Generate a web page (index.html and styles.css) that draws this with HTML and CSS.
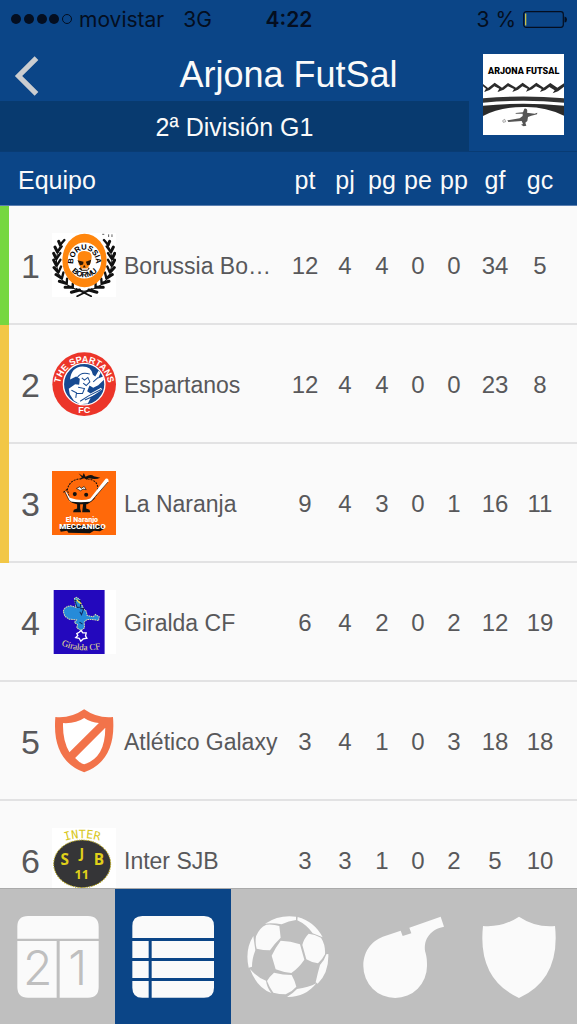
FILE: index.html
```html
<!DOCTYPE html>
<html lang="es">
<head>
    <meta charset="UTF-8">
    <meta name="viewport" content="width=device-width, initial-scale=1">
    <title>Arjona FutSal</title>
    <link rel="stylesheet" href="styles.css">
</head>
<body>
<div class="app">

    <header class="header">
        <div class="status">
            <div class="status-left">
                <svg class="signal" viewBox="0 0 61 12">
                    <circle cx="5" cy="6" r="5"/>
                    <circle cx="18" cy="6" r="5"/>
                    <circle cx="31" cy="6" r="5"/>
                    <circle cx="43" cy="6" r="5"/>
                    <circle cx="56" cy="6" r="4.5" fill="none" stroke="#040e20"/>
                </svg>
                <span>movistar</span>
                <span class="network">3G</span>
            </div>
            <div class="clock">4:22</div>
            <div class="status-right">
                <span>3 %</span>
                <svg class="battery" viewBox="0 0 44 17">
                    <rect x=".7" y=".7" width="39.6" height="15.6" rx="2.5" fill="none" stroke="#040e20" stroke-width="1.2"/>
                    <path d="M41.5 5.5Q44 6 44 8.500T41.500 11.500Z"/>
                    <rect x="2" y="2.500" width="1.300" height="12" fill="#c9c24b"/>
                </svg>
            </div>
        </div>

        <div class="bar">
            <button class="back" type="button" aria-label="Volver">
                <svg viewBox="0 0 24 38"><path d="M21 2 4 19 21 36" fill="none" stroke="#cbcdd0" stroke-width="5"/></svg>
            </button>
            <h1 class="title">Arjona FutSal</h1>
            <h2 class="division">2ª División G1</h2>
            <!--escudo del club-->
            <svg class="club" viewBox="9 12 243 243">
                <rect x="9" y="12" width="243" height="243" fill="#fff"/>
                <text class="club-name" x="131" y="73" text-anchor="middle">ARJONA FUTSAL</text>
                <path d="M9 102 24 114 44 98 66 113 84 99 108 113 128 98 149 113 169 98 191 113 211 99 232 113 252 100V110L234 124 218 130 224 121 208 111 196 120 180 126 185 117 168 109 156 118 138 125 143 116 127 109 114 119 97 126 102 117 84 109 71 119 52 126 58 116 43 109 29 120 12 126 18 116 9 109Z" fill="#2b2b2b"/>
                <path d="M9 145Q130 134 252 145V158Q130 147 9 158Z" fill="#333"/>
                <path d="M9 167Q130 155 252 167V197Q195 169 131 171 60 171 9 198Z" fill="#2b2b2b"/>
                <path d="M133 176Q141 174 142 182L141 188 164 191 172 188 171 193 154 197 144 201 142 213 136 218 139 227 131 229 123 224 129 222 125 213 85 216 82 211 119 205 128 198 128 191 107 191 107 189 129 187Z" fill="#555"/>
                <path d="M68 212 74 208 77 215 70 217Z" fill="none" stroke="#777" stroke-width="2"/>
            </svg>
        </div>
    </header>

    <main class="content">
        <table class="ranking">
            <colgroup>
                <col class="col-zone"><col class="col-rank"><col class="col-crest"><col>
                <col class="col-pt"><col class="col-pj"><col class="col-n"><col class="col-n"><col class="col-n"><col class="col-gf"><col class="col-gc">
            </colgroup>
            <thead>
                <tr>
                    <th class="team" colspan="4">Equipo</th>
                    <th>pt</th><th>pj</th><th>pg</th><th>pe</th><th>pp</th><th>gf</th><th>gc</th>
                </tr>
            </thead>
            <tbody>
                <tr>
                    <td class="zone promotion"></td>
                    <td class="rank">1</td>
                    <td class="crest">
                        <svg viewBox="156 82 191 191">
                            <rect x="156" y="82" width="191" height="191" fill="#fff"/>
                            <!--corona de laurel, mitad izquierda y su reflejo-->
                            <g id="laurel" fill="none" stroke="#111" stroke-linecap="round">
                                <path d="M192 103Q158 145 175 202 194 247 252 256" stroke-width="3"/>
                                <path d="M180 116 176 107M172 138 165 124M168 158 161 143M169 178 161 163M174 198 162 185M184 216 168 206M198 232 178 226M216 244 195 244M238 252 214 259" stroke-width="9"/>
                                <path d="M180 118 193 103M173 138 185 122M170 158 181 142M171 178 181 162M176 198 183 182M186 216 190 200M200 232 201 218M218 244 218 233" stroke-width="7"/>
                                <path d="M275 249 231 271" stroke-width="5"/>
                            </g>
                            <use href="#laurel" transform="matrix(-1 0 0 1 504 0)"/>
                            <path d="M306 86H312M325 86V94M335 86V94" fill="none" stroke="#111" stroke-width="2"/>
                            <ellipse cx="253" cy="164" rx="66" ry="80" fill="#ff860d"/>
                            <ellipse cx="253" cy="164" rx="50" ry="54" fill="#fff"/>
                            <path d="M233 158Q230 136 253 136 277 137 274 158L270 174 262 188H244L236 176Z" fill="#ff860d"/>
                            <path d="M232 163 250 168 249 176 240 178ZM257 168 273 162 269 177 261 178ZM252 177 257 185H248ZM242 184 246 192H262L266 184 268 189 261 195H244L236 188Z" fill="#2a1705"/>
                            <path id="arc1" d="M219 170A34 38 0 0 1 287 170" fill="none"/>
                            <path id="arc2" d="M207 174A46 40 0 0 0 299 174" fill="none"/>
                            <text class="ring-text" font-size="23" text-anchor="middle"><textPath href="#arc1" startOffset="50%">BORUSSIA</textPath></text>
                            <text class="ring-text" font-size="23" text-anchor="middle"><textPath href="#arc2" startOffset="50%">BORMU</textPath></text>
                        </svg>
                    </td>
                    <td class="name">Borussia Bo…</td>
                    <td>12</td><td>4</td><td>4</td><td>0</td><td>0</td><td>34</td><td>5</td>
                </tr>
                <tr>
                    <td class="zone playoff"></td>
                    <td class="rank">2</td>
                    <td class="crest">
                        <svg viewBox="156 81 191 191">
                            <circle cx="252" cy="177" r="95" fill="#ec3529"/>
                            <circle cx="252" cy="177" r="62" fill="#174a91" stroke="#fff" stroke-width="4"/>
                            <path d="M210 163Q213 126 247 124 274 124 278 149L285 154 295 137 301 143 293 160 309 154 311 164 294 180 279 188 268 181 261 198 271 205 302 188 306 193 272 216 263 235 239 237 221 226 209 207 206 191 225 177 237 179 239 161 228 154Z" fill="#fff"/>
                            <path d="M231 158Q243 138 269 147M245 158 253 165 263 157 269 170 258 181 249 174M214 195 229 203 227 218M234 186 253 190 247 205 229 204M240 228 265 212 303 193M254 224 293 207M279 170 294 157" fill="none" stroke="#174a91" stroke-width="3"/>
                            <path id="arc3" d="M180 184A72 72 0 1 1 324 184" fill="none"/>
                            <text class="ring-text" font-size="27" fill="#fff" text-anchor="middle"><textPath href="#arc3" startOffset="50%">THE SPARTANS</textPath></text>
                            <text class="ring-text" x="252" y="263" font-size="27" fill="#fff" text-anchor="middle">FC</text>
                        </svg>
                    </td>
                    <td class="name">Espartanos</td>
                    <td>12</td><td>4</td><td>4</td><td>0</td><td>0</td><td>23</td><td>8</td>
                </tr>
                <tr>
                    <td class="zone playoff"></td>
                    <td class="rank">3</td>
                    <td class="crest">
                        <svg viewBox="156 78 191 191">
                            <rect x="156" y="78" width="191" height="191" fill="#ff690a"/>
                            <path d="M235 85 247 93 251 84 256 95Q272 86 281 94L300 98Q286 105 265 99L260 104 252 100 239 103 245 97Z" fill="#111"/>
                            <path d="M244 101Q209 103 202 132L207 157M262 102Q290 104 293 128L288 153M190 142 202 132" fill="none" stroke="#111" stroke-width="3" stroke-dasharray="6 3"/>
                            <path d="M203 158Q246 181 287 157L273 170 261 177H230L216 173Z" fill="#111"/>
                            <path d="M194 138 200 142 209 158Q245 170 270 160L316 101Q325 98 325 109L277 164 269 170Q236 173 209 169Z" fill="#fff"/>
                            <path d="M194 139 206 164 214 171M323 111 277 164" fill="none" stroke="#111" stroke-width="2"/>
                            <path d="M229 130 239 125 243 130 252 124 258 134 249 132 241 137Z" fill="#fff" stroke="#111" stroke-width="2"/>
                            <circle cx="224" cy="147" r="6" fill="#111"/>
                            <circle cx="258" cy="149" r="6" fill="#111"/>
                            <path d="M231 176H240V190L243 201H219L221 194 231 190ZM249 176H258V190L268 194 270 201H246Z" fill="#111"/>
                            <path d="M179 250 184 240H305L312 250 299 258 281 256 269 264 205 262 201 256 182 259Z" fill="#111"/>
                            <text class="toon-text" x="245" y="229" font-size="21" text-anchor="middle">El Naranjo</text>
                            <text class="toon-text" x="247" y="251" font-size="24" text-anchor="middle">MECCANICO</text>
                        </svg>
                    </td>
                    <td class="name">La Naranja</td>
                    <td>9</td><td>4</td><td>3</td><td>0</td><td>1</td><td>16</td><td>11</td>
                </tr>
                <tr>
                    <td class="zone"></td>
                    <td class="rank">4</td>
                    <td class="crest">
                        <svg viewBox="156 75 191 191">
                            <rect x="156" y="75" width="191" height="191" fill="#fff"/>
                            <rect x="161" y="75" width="152" height="191" fill="#2308bd"/>
                            <path d="M190 139Q191 126 211 122L228 127 225 112 223 100 230 97 241 106 240 116 249 125 248 130 258 138 261 151 279 155 286 148 297 155 295 166 275 163 260 163 252 171 253 188 243 196 230 188 232 178 223 172 229 164 207 162 194 153Z" fill="#268bd9" stroke="#d6dcac" stroke-width="3" stroke-dasharray="5 2"/>
                            <path d="M224 106H241V126L231 127ZM240 131 251 130 244 149 239 140M238 171 247 177" fill="none" stroke="#10275c" stroke-width="3"/>
                            <path d="M229 103 235 110 244 116" fill="none" stroke="#f1e64c" stroke-width="4"/>
                            <path d="M230 205 237 201 243 196 248 203 258 203 256 212 260 219 249 221 242 228 237 219 227 217 233 211Z" fill="#2308bd" stroke="#fff" stroke-width="4"/>
                            <path id="arc4" d="M187 241Q240 263 298 251" fill="none"/>
                            <text class="script-text" font-size="27" text-anchor="middle"><textPath href="#arc4" startOffset="50%">Giralda CF</textPath></text>
                        </svg>
                    </td>
                    <td class="name">Giralda CF</td>
                    <td>6</td><td>4</td><td>2</td><td>0</td><td>2</td><td>12</td><td>19</td>
                </tr>
                <tr>
                    <td class="zone"></td>
                    <td class="rank">5</td>
                    <td class="crest">
                        <svg viewBox="156 72 191 191">
                            <path d="M252 73Q292 101 338 96 349 226 252 261 155 226 166 96 211 101 252 73Z" fill="#f2734a"/>
                            <path d="M252 99Q273 113 296 114L208 201Q187 166 189 114 228 116 252 99ZM315 128Q315 218 252 237 238 233 225 218Z" fill="#fff"/>
                        </svg>
                    </td>
                    <td class="name">Atlético Galaxy</td>
                    <td>3</td><td>4</td><td>1</td><td>0</td><td>3</td><td>18</td><td>18</td>
                </tr>
                <tr>
                    <td class="zone"></td>
                    <td class="rank">6</td>
                    <td class="crest">
                        <svg viewBox="156 428 191 191">
                            <rect x="156" y="428" width="191" height="191" fill="#fff"/>
                            <ellipse cx="246" cy="535" rx="85" ry="71" fill="#353537" stroke="#b5a51b" stroke-width="3" stroke-dasharray="4 3"/>
                            <path id="arc5" d="M182 471Q246 446 311 470" fill="none"/>
                            <text class="inter-text" font-size="35" text-anchor="middle"><textPath href="#arc5" startOffset="50%">INTER</textPath></text>
                            <g class="sjb-text" text-anchor="middle">
                                <text x="194" y="537" font-size="46">S</text>
                                <text x="245" y="519" font-size="42">J</text>
                                <text x="296" y="538" font-size="46">B</text>
                                <text x="245" y="581" font-size="38">11</text>
                            </g>
                        </svg>
                    </td>
                    <td class="name">Inter SJB</td>
                    <td>3</td><td>3</td><td>1</td><td>0</td><td>2</td><td>5</td><td>10</td>
                </tr>
            </tbody>
        </table>
    </main>

    <!--menu inferior-->
    <nav class="tabs">
        <a class="tab" href="#calendario" aria-label="Calendario">
            <svg viewBox="50 90 246 246">
                <path d="M51 158V122Q51 90 83 90H263Q295 90 295 122V158ZM51 165H169V335H83Q51 335 51 303ZM178 165H295V303Q295 335 263 335H178Z"/>
                <text class="day" x="112" y="297" text-anchor="middle">2</text>
                <text class="day" x="232" y="297" text-anchor="middle">1</text>
            </svg>
        </a>
        <a class="tab active" href="#clasificacion" aria-label="Clasificación">
            <svg viewBox="396 90 246 246">
                <path d="M397 156V120Q397 90 427 90H612Q642 90 642 120V156ZM397 165H446V216H397ZM455 165H642V216H455ZM397 225H446V276H397ZM455 225H642V276H455ZM397 285H446V335H427Q397 335 397 305ZM455 285H642V305Q642 335 612 335H455Z"/>
            </svg>
        </a>
        <a class="tab" href="#partidos" aria-label="Partidos">
            <svg viewBox="53 89 246 246">
                <path d="M107 112Q150 84 200 91V101Q178 104 157 114Q130 109 107 112ZM205 92Q255 105 280 153L250 141Q232 115 204 102ZM80 150Q90 124 111 115Q132 113 150 119L154 154Q136 171 122 192Q101 192 82 187Q77 170 80 150ZM219 176Q223 157 238 142Q256 143 275 154Q289 176 287 204Q279 220 266 231Q249 230 231 219ZM154 163Q184 164 212 174L225 220Q208 245 186 260Q161 258 139 249L127 208Q138 184 154 163ZM72 149 74 163 78 192Q68 218 68 241L58 244Q46 190 72 149ZM62 248Q82 272 110 283Q113 304 126 320Q82 303 62 248ZM134 259Q161 266 187 266Q197 284 201 301Q187 317 169 324Q150 324 132 319Q120 303 113 284Q121 270 134 259ZM174 331Q190 322 203 308Q238 304 261 291Q228 333 174 332ZM297 203Q299 260 265 292L259 288Q265 260 272 236Q286 221 291 204Z"/>
            </svg>
        </a>
        <a class="tab" href="#arbitros" aria-label="Árbitros">
            <svg viewBox="399 89 246 246">
                <path d="M400 239C400 190 430 160 465 149L512 133 518 149 544 141 538 124 632 91 642 121C595 130 578 167 587 201C591 215 591 228 591 239A95.500 96 0 0 1 400 239Z"/>
            </svg>
        </a>
        <a class="tab" href="#equipos" aria-label="Equipos">
            <svg viewBox="745 89 246 246">
                <path d="M868 91Q917 124 976 119 993 277 868 335 743 277 760 119 818 124 868 91Z"/>
            </svg>
        </a>
    </nav>

</div>
</body>
</html>
```
FILE: styles.css
```css
* {
    box-sizing: border-box;
}

body {
    margin: 0;
    font-family: "Liberation Sans", Arial, sans-serif;
    color: #58585a;
    background-color: #fafafa;
}

svg {
    display: block;
}

.app {
    display: flex;
    flex-direction: column;
    height: 100vh;
}

/* cabecera */
.header {
    color: #fafafa;
    background-color: #0b4587;
}

.status {
    display: grid;
    grid-template-columns: 1fr auto 1fr;
    align-items: center;
    height: 38px;
    padding: 0 10px 0 11px;
    font-family: Inter, sans-serif;
    font-size: 21px;
    color: #040e20;
    fill: #040e20;
}

.status-left, .status-right {
    display: flex;
    align-items: center;
    gap: 7px;
}

.status-right {
    justify-content: flex-end;
}

.signal {
    width: 61px;
    height: 12px;
}

.network {
    margin-left: 12px;
}

.clock {
    font-weight: 600;
}

.battery {
    width: 44px;
    height: 17px;
}

.bar {
    display: grid;
    grid-template-columns: 108px 1fr 108px;
    grid-template-rows: 63px 50px;
    border-bottom: 1px solid #093b73;
}

.back {
    padding: 12px 14px 0;
    border: 0;
    background: none;
    cursor: pointer;
}

.back svg {
    width: 26px;
    height: 40px;
}

.title {
    margin: 0;
    padding-top: 9px;
    font-size: 36px;
    font-weight: normal;
    line-height: 56px;
    text-align: center;
}

.division {
    grid-column: 1 / 3;
    grid-row: 2;
    margin: 0;
    font-size: 25px;
    font-weight: normal;
    line-height: 53px;
    text-align: center;
    background-color: #083a6f;
}

.club {
    grid-column: 3;
    grid-row: 1 / 3;
    align-self: center;
    width: 81px;
    height: 81px;
    margin-left: 14px;
}

.club-name {
    font: 900 27px Roboto, sans-serif;
    fill: #000;
}

/* clasificacion */
.content {
    flex: 1;
    min-height: 0;
    overflow-y: auto;
    scrollbar-width: none;
}

.ranking {
    width: 100%;
    table-layout: fixed;
    border-spacing: 0;
}

.col-zone { width: 9px; }
.col-rank { width: 43px; }
.col-crest { width: 64px; }
.col-pt { width: 42px; }
.col-pj { width: 38px; }
.col-n { width: 36px; }
.col-gf { width: 46px; }
.col-gc { width: 59px; }

th, td {
    padding: 3px 0 0;
    text-align: center;
}

th:last-child, td:last-child {
    padding-right: 15px;
}

th {
    position: sticky;
    top: 0;
    height: 54px;
    font-size: 25px;
    font-weight: normal;
    color: #fafafa;
    background-color: #0b4587;
    border-bottom: 1px solid #5b7fb0;
}

.team {
    padding-left: 18px;
    text-align: left;
}

td {
    height: 119px;
    font-size: 24px;
    border-bottom: 2px solid #e2e2e3;
}

.rank {
    font-size: 34px;
}

.promotion {
    background-color: #76d73f;
    border-bottom-color: #76d73f;
}

.playoff {
    background-color: #f2c746;
    border-bottom-color: #f2c746;
}

.crest {
    padding: 0;
}

.crest svg {
    width: 64px;
    height: 64px;
}

.name {
    padding-left: 8px;
    font-size: 23px;
    text-align: left;
    white-space: nowrap;
}

.ring-text {
    font-family: "Liberation Sans", Arial, sans-serif;
    font-weight: bold;
}

.toon-text {
    font-family: Roboto, sans-serif;
    font-weight: 900;
    fill: #fff;
}

.script-text {
    font-family: "Liberation Serif", serif;
    fill: #efe48d;
}

.inter-text {
    font-family: "DejaVu Sans Mono", monospace;
    fill: #d8c71c;
}

.sjb-text {
    font-family: "Open Sans", sans-serif;
    font-weight: bold;
    fill: #e0d01a;
}

/* menu */
.tabs {
    display: grid;
    grid-template-columns: repeat(5, 1fr);
    height: 136px;
    background-color: #bfbfbf;
    border-top: 1px solid #aaa;
}

.tab {
    display: flex;
    align-items: center;
    justify-content: center;
    fill: #fafafa;
}

.tab.active {
    background-color: #0b4587;
}

.tab svg {
    width: 82px;
    height: 82px;
}

.day {
    font: 300 144px Inter, sans-serif;
    fill: #bfbfbf;
}
```
